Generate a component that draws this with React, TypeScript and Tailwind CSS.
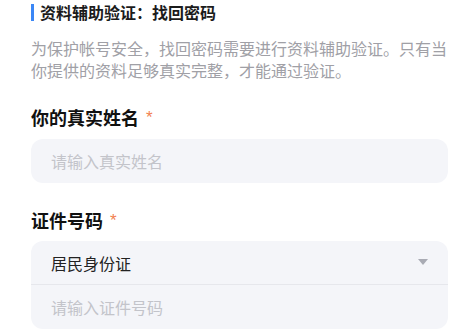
import React from "react";

const font = { fontFamily: '"Noto Sans CJK SC", "Noto Sans", sans-serif' };

export default function App() {
  return (
    <div
      className="w-[459px] h-[335px] bg-white overflow-hidden pl-[31px] pr-[11px]"
      style={font}
    >
      <div className="flex items-center h-[24px]">
        <div className="w-[3px] h-[17px] bg-[#3b87f6] mt-[1px]" />
        <div className="ml-[6px] text-[16px] leading-[24px] font-bold text-[#1b1b1b]">
          资料辅助验证：找回密码
        </div>
      </div>
      <p className="mt-[13px] text-[16px] leading-[22px] text-[#a0a0a6]">
        为保护帐号安全，找回密码需要进行资料辅助验证。只有当你提供的资料足够真实完整，才能通过验证。
      </p>

      <div className="mt-[23px] flex items-center h-[26px]">
        <span className="text-[18px] leading-[26px] font-bold text-[#111]">你的真实姓名</span>
        <span
          className="ml-[7px] text-[17px] leading-[26px] text-[#f2814f] mt-[1px]"
          style={{ fontFamily: '"Liberation Sans", sans-serif' }}
        >
          *
        </span>
      </div>
      <div className="mt-[9px] h-[44px] rounded-[12px] bg-[#f4f5f9] flex items-center pl-[20px]">
        <span className="text-[16px] text-[#c3c4ca]">请输入真实姓名</span>
      </div>

      <div className="mt-[24px] flex items-center h-[26px]">
        <span className="text-[18px] leading-[26px] font-bold text-[#111]">证件号码</span>
        <span
          className="ml-[7px] text-[17px] leading-[26px] text-[#f2814f] mt-[1px]"
          style={{ fontFamily: '"Liberation Sans", sans-serif' }}
        >
          *
        </span>
      </div>
      <div className="mt-[8px] rounded-[12px] bg-[#f4f5f9] overflow-hidden">
        <div className="h-[44px] flex items-center justify-between pl-[20px] pr-[20px] border-b border-[#e6e7ec]">
          <span className="text-[16px] text-[#222]">居民身份证</span>
          <svg width="10" height="7" viewBox="0 0 10 7">
            <polygon points="0,0 10,0 5,6" fill="#a9abb4" />
          </svg>
        </div>
        <div className="h-[44px] flex items-center pl-[20px]">
          <span className="text-[16px] text-[#c3c4ca]">请输入证件号码</span>
        </div>
      </div>
    </div>
  );
}
